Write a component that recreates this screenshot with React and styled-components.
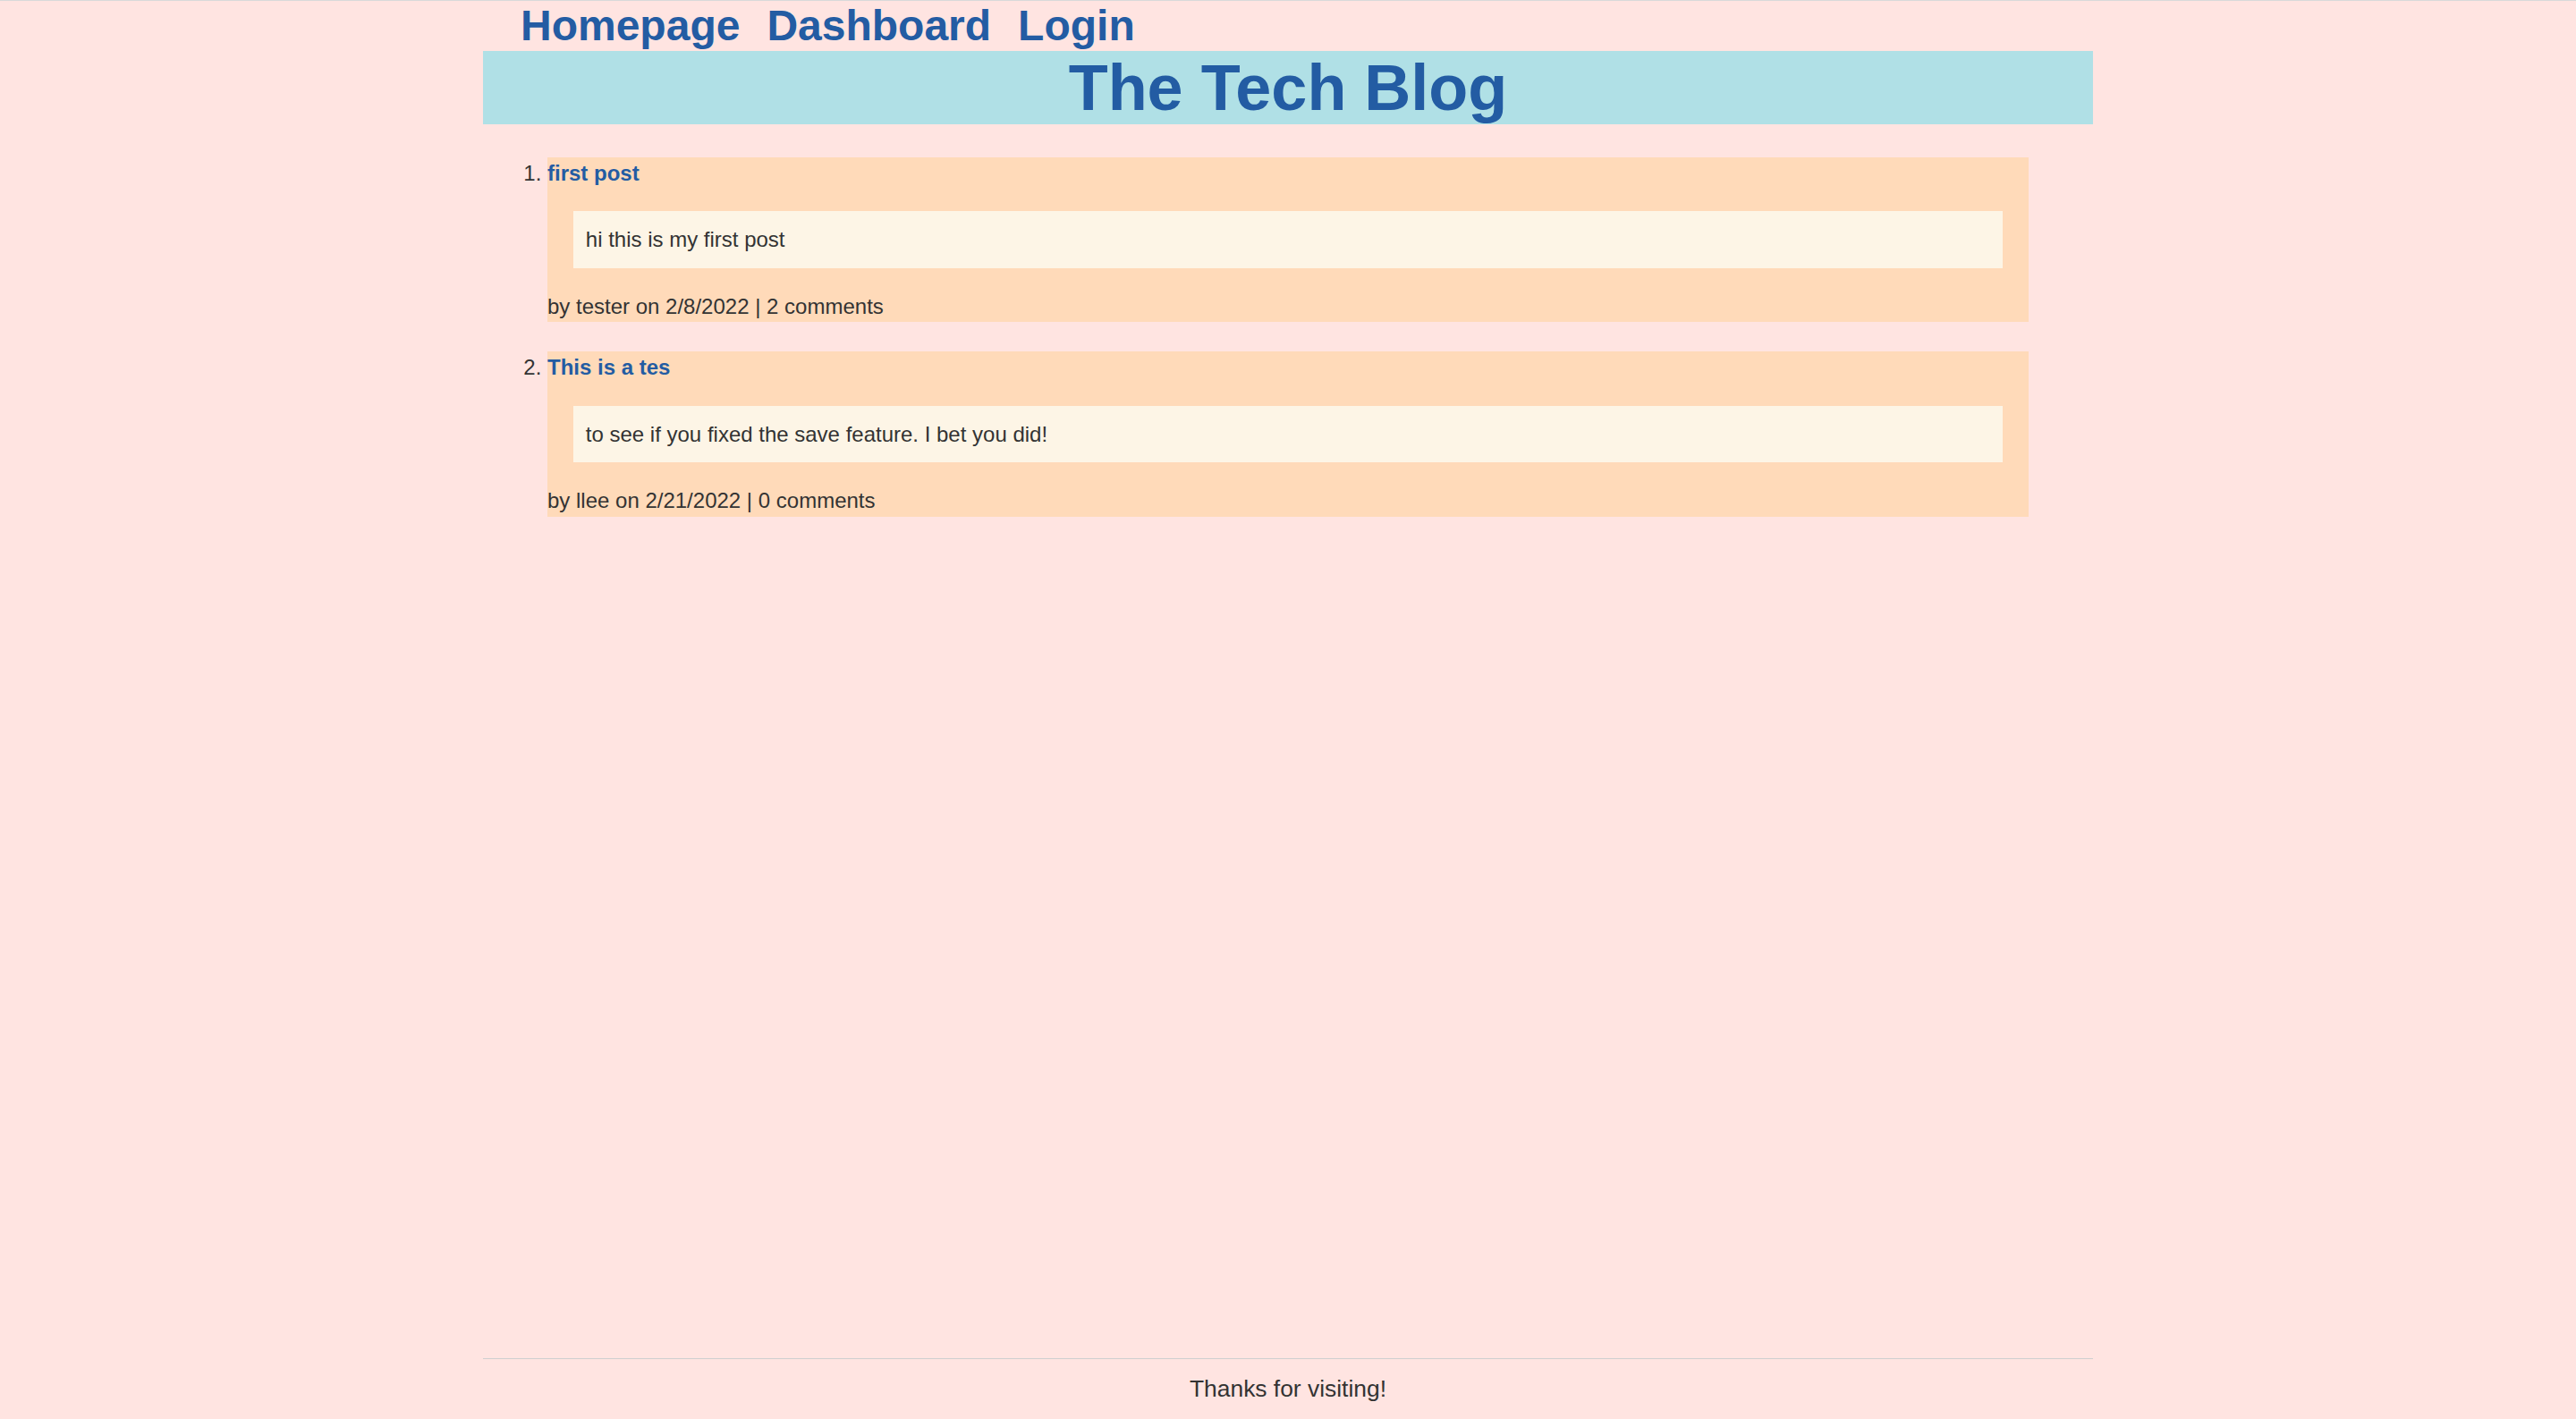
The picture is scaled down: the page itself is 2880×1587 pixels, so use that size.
import React from "react";
import styled, { createGlobalStyle } from "styled-components";

const posts = [
  {
    id: 1,
    title: "first post",
    body: "hi this is my first post",
    author: "tester",
    date: "2/8/2022",
    comments: 2,
  },
  {
    id: 2,
    title: "This is a tes",
    body: "to see if you fixed the save feature. I bet you did!",
    author: "llee",
    date: "2/21/2022",
    comments: 0,
  },
];

const GlobalStyle = createGlobalStyle`
  html, body {
    margin: 0;
    padding: 0;
    background: #ffe4e1;
  }

  body {
    font-family: "Liberation Sans", Arial, sans-serif;
    color: #333;
  }

  * {
    box-sizing: border-box;
  }
`;

const App = () => {
  return (
    <>
      <GlobalStyle />
      <Page>
        <Wrapper>
          <Nav>
            <NavLink href="#">Homepage</NavLink>
            <NavLink href="#">Dashboard</NavLink>
            <NavLink href="#">Login</NavLink>
          </Nav>
          <Banner>The Tech Blog</Banner>

          <Main>
            <PostList>
              {posts.map((post) => (
                <Post key={post.id}>
                  <PostTitle href="#">{post.title}</PostTitle>
                  <PostBody>{post.body}</PostBody>
                  <PostMeta>
                    by {post.author} on {post.date} | {post.comments} comments
                  </PostMeta>
                </Post>
              ))}
            </PostList>
          </Main>

          <Footer>Thanks for visiting!</Footer>
        </Wrapper>
      </Page>
    </>
  );
};

export default App;

const Page = styled.div`
  min-height: 100vh;
  border-top: 1px solid #d9d9d9;
  display: flex;
  justify-content: center;
`;

const Wrapper = styled.div`
  width: 1800px;
  display: flex;
  flex-direction: column;
`;

const Nav = styled.nav`
  height: 56px;
  display: flex;
  align-items: flex-start;
  gap: 30px;
  padding-left: 42px;
`;

const NavLink = styled.a`
  font-size: 48px;
  font-weight: 700;
  color: #235ca3;
  text-decoration: none;
  line-height: 55px;
`;

const Banner = styled.h1`
  margin: 0;
  height: 82px;
  background: #b0e0e6;
  color: #235ca3;
  font-size: 72px;
  font-weight: 700;
  line-height: 82px;
  text-align: center;
`;

const Main = styled.main`
  flex: 1;
  padding-top: 37px;
`;

const PostList = styled.ol`
  margin: 0;
  padding: 0 72px;
  font-size: 24px;
  color: #333;
`;

const Post = styled.li`
  background: #ffdab9;
  padding: 4px 0;
  margin-bottom: 33px;
  line-height: 27.6px;
`;

const PostTitle = styled.a`
  display: block;
  color: #235ca3;
  font-weight: 700;
  text-decoration: none;
`;

const PostBody = styled.p`
  margin: 28.8px;
  padding: 18px 14px;
  background: #fdf5e6;
`;

const PostMeta = styled.p`
  margin: 0;
`;

const Footer = styled.footer`
  border-top: 1px solid #cfcfcf;
  padding: 18px 0 19px;
  font-size: 26.4px;
  line-height: 30px;
  text-align: center;
  color: #333;
`;
